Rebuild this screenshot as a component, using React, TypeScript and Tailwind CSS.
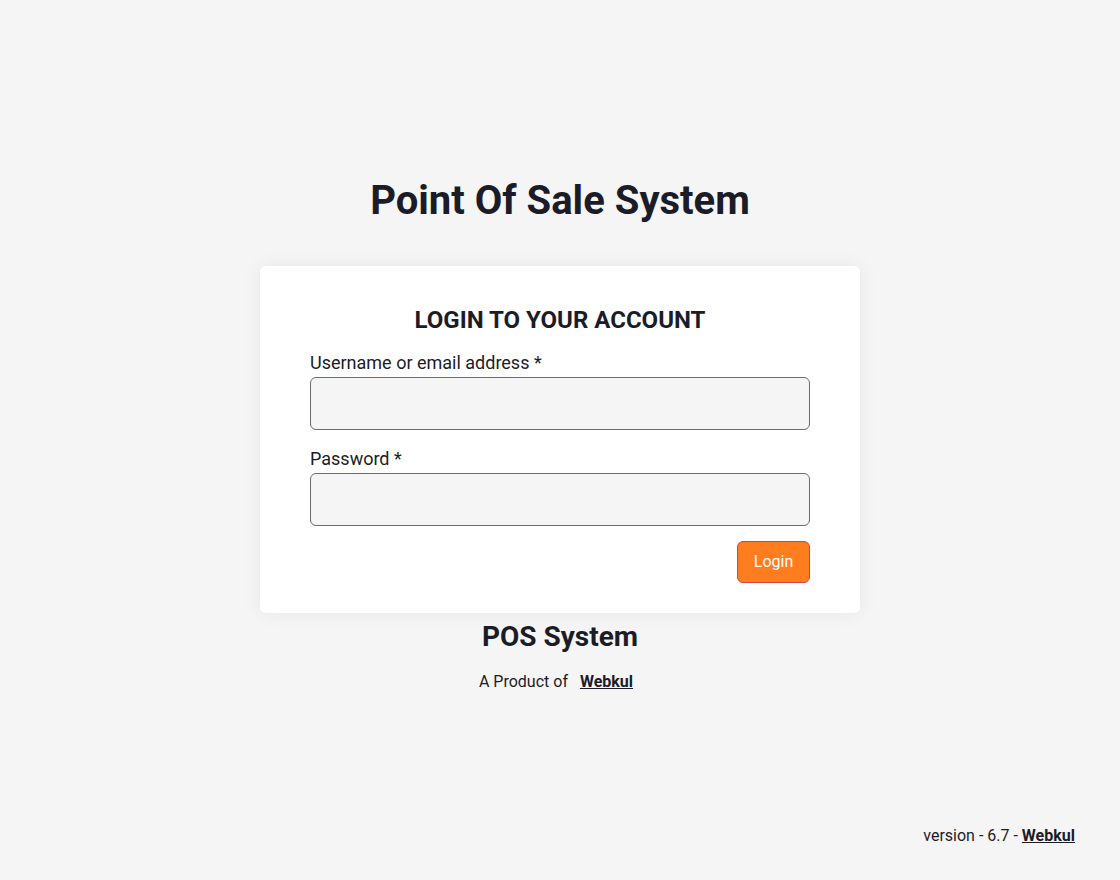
const Field = ({ label, type }: { label: string; type: string }) => (
  <div className="flex flex-col">
    <label className="pt-[1px] mb-[2px] text-[18px] leading-[24px] text-[#1c1c28]">{label}</label>
    <input
      type={type}
      className="h-[53px] w-full rounded-md border border-[#6b6b6b] bg-[#f5f5f5] px-3 outline-none"
    />
  </div>
)

const App = () => {
  return (
    <div
      className="min-h-screen flex flex-col bg-[#f5f5f5] text-[#1c1c28]"
      style={{ fontFamily: "Roboto, 'Liberation Sans', sans-serif" }}
    >
      <main className="flex-1 flex flex-col items-center pt-[177px]">
        <h1 className="text-[40px] leading-[48px] font-bold">Point Of Sale System</h1>
        <div className="mt-[41px] w-[600px] rounded-md bg-white px-[50px] pt-[40px] pb-[30px] shadow-[0_0_20px_rgba(0,0,0,0.06)]">
          <h2 className="text-center text-[24px] leading-[28px] font-bold">LOGIN TO YOUR ACCOUNT</h2>
          <form className="mt-[16px] flex flex-col gap-[16px]">
            <Field label="Username or email address *" type="text" />
            <Field label="Password *" type="password" />
          </form>
          <div className="mt-[15px] flex justify-end">
            <button className="h-[42px] w-[73px] rounded-md border border-[#d9433a] bg-[#ff7d1f] text-[16px] text-white">
              Login
            </button>
          </div>
        </div>
        <h3 className="mt-[8px] text-[28px] leading-[32px] font-bold">POS System</h3>
        <p className="mt-[19px] text-[16px] leading-[20px]">
          A Product of{" "}
          <a href="#" className="ml-[8px] mr-[8px] font-bold underline">
            Webkul
          </a>
        </p>
      </main>
      <footer className="flex justify-end pr-[45px] pb-[34px] text-[16px] leading-[20px]">
        <span>
          version - 6.7 -{" "}
          <a href="#" className="font-bold underline">
            Webkul
          </a>
        </span>
      </footer>
    </div>
  )
}

export default App
